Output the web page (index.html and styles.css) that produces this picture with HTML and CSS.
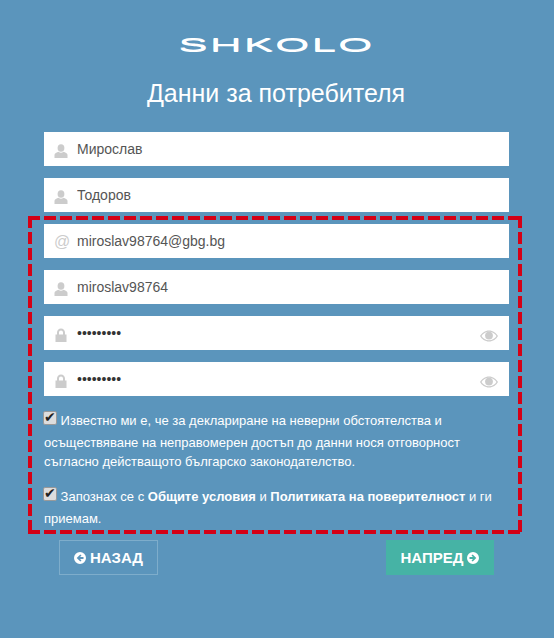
FILE: index.html
```html
<!DOCTYPE html>
<html lang="bg">
<head>
<meta charset="utf-8">
<title>Данни за потребителя</title>
<link rel="stylesheet" href="styles.css">
</head>
<body>

<div class="logo"><span>SHKOLO</span></div>
<h1 class="title">Данни за потребителя</h1>

<form class="form">
  <div class="field">
    <svg class="icon" viewBox="0 0 14 14"><use href="#user"/></svg>
    <input type="text" value="Мирослав">
  </div>
  <div class="field">
    <svg class="icon" viewBox="0 0 14 14"><use href="#user"/></svg>
    <input type="text" value="Тодоров">
  </div>

  <div class="marked">
    <div class="field">
      <span class="icon at">@</span>
      <input type="text" value="miroslav98764@gbg.bg">
    </div>
    <div class="field">
      <svg class="icon" viewBox="0 0 14 14"><use href="#user"/></svg>
      <input type="text" value="miroslav98764">
    </div>
    <div class="field">
      <svg class="icon" viewBox="0 0 14 14"><use href="#lock"/></svg>
      <input type="password" value="miroslav9">
      <svg class="eye" viewBox="0 0 18 12"><use href="#eye"/></svg>
    </div>
    <div class="field">
      <svg class="icon" viewBox="0 0 14 14"><use href="#lock"/></svg>
      <input type="password" value="miroslav9">
      <svg class="eye" viewBox="0 0 18 12"><use href="#eye"/></svg>
    </div>

    <label class="agree first">
      <input type="checkbox" checked>
      Известно ми е, че за деклариране на неверни обстоятелства и осъществяване на неправомерен достъп до данни нося отговорност съгласно действащото българско законодателство.
    </label>
    <label class="agree">
      <input type="checkbox" checked>
      Запознах се с <b>Общите условия</b> и <b>Политиката на поверителност</b> и ги приемам.
    </label>
  </div>

  <div class="actions">
    <a class="btn back" href="#">
      <svg class="arrow" viewBox="0 0 12 12"><use href="#left"/></svg>
      НАЗАД
    </a>
    <a class="btn next" href="#">
      НАПРЕД
      <svg class="arrow flip" viewBox="0 0 12 12"><use href="#left"/></svg>
    </a>
  </div>
</form>

<svg class="defs" width="0" height="0">
  <defs>
    <g id="user">
      <ellipse cx="7" cy="4" rx="3.400" ry="3.800"/>
      <path d="M.5 14V10.800C.5 9.200 2.800 8.300 4.600 7.700 5.300 8.400 6.100 8.700 7 8.700S8.700 8.400 9.400 7.700C11.200 8.300 13.500 9.200 13.500 10.800V14Z"/>
    </g>
    <g id="lock">
      <path d="M1.500 6.500H3V4.500C3 2.200 4.700.5 7 .5S11 2.200 11 4.500V6.500H12.500V14H1.500ZM5 6.500H9V4.500C9 3.300 8.100 2.400 7 2.400S5 3.300 5 4.500Z"/>
    </g>
    <g id="eye">
      <path fill-rule="evenodd" d="M9 .5C13 .5 16.300 3 18 6 16.300 9 13 11.500 9 11.500S1.700 9 0 6C1.700 3 5 .5 9 .5ZM9 1.700C5.800 1.700 3 3.500 1.500 6 3 8.500 5.800 10.300 9 10.300S15 8.500 16.500 6C15 3.500 12.200 1.700 9 1.700Z"/>
      <circle cx="9" cy="5.600" r="3.900"/>
    </g>
    <g id="left">
      <path fill-rule="evenodd" d="M6 0A6 6 0 1 1 6 12 6 6 0 0 1 6 0ZM6.300 2.400 2.700 6 6.300 9.600 7.500 8.400 6 6.900H9.500V5.100H6L7.500 3.600Z"/>
    </g>
  </defs>
</svg>

</body>
</html>
```

FILE: styles.css
```css
* { box-sizing: border-box; }

body {
  margin: 0;
  background-color: #5b95bc;
  color: #fff;
  font-family: "Liberation Sans", Arial, sans-serif;
  font-size: 14px;
}

.logo {
  height: 16px;
  margin-top: 37px;
  text-align: center;
  line-height: 16px;
}

.logo span {
  display: inline-block;
  font-size: 19px;
  letter-spacing: 1px;
  text-shadow: 0 1px 0 #fff;
  transform: scaleX(2.3);
}

.title {
  margin: 26px 2px 25px 0;
  font-size: 25px;
  font-weight: normal;
  line-height: 28px;
  text-align: center;
}

.form {
  margin: 0 45px 0 44px;
}

.field {
  display: flex;
  align-items: center;
  height: 34px;
  margin-bottom: 12px;
  padding: 0 11px 0 10px;
  background-color: #fff;
}

.field input {
  flex: 1;
  min-width: 0;
  height: 100%;
  padding: 0 0 0 9px;
  border: none;
  outline: none;
  background: none;
  color: #555;
  font-family: inherit;
  font-size: 14px;
}

.field input[type="password"] {
  color: #333;
}

.icon {
  flex: none;
  width: 14px;
  height: 14px;
  margin-top: 4px;
  fill: #ccc;
}

.at {
  margin-top: 2px;
  color: #ccc;
  font-size: 16px;
  line-height: 14px;
  text-align: center;
}

.eye {
  flex: none;
  width: 18px;
  height: 12px;
  margin-top: 6px;
  fill: #ccc;
}

.marked {
  margin: -8px -13px 0 -16px;
  padding: 8px 13px 6px 16px;
  background:
    linear-gradient(90deg, #d40016 12px, transparent 12px) 0 0 / 16px 4px repeat-x,
    linear-gradient(90deg, #d40016 12px, transparent 12px) 0 100% / 16px 4px repeat-x,
    linear-gradient(#d40016 12px, transparent 12px) 0 0 / 4px 16px repeat-y,
    linear-gradient(#d40016 12px, transparent 12px) 100% 0 / 4px 16px repeat-y;
}

.agree {
  display: block;
  font-size: 13px;
  line-height: 19px;
}

.agree.first {
  margin-bottom: 16px;
  padding-top: 3px;
}

.agree input {
  appearance: none;
  position: relative;
  width: 14px;
  height: 14px;
  margin: 0 0 8px -1px;
  border: 1px solid #999;
  border-radius: 2px;
  background-color: #ddd;
  vertical-align: -8px;
}

.agree input::after {
  content: "\2714";
  position: absolute;
  left: 0;
  top: -2px;
  color: #222;
  font-family: "DejaVu Sans", sans-serif;
  font-size: 14px;
  line-height: 14px;
}

.actions {
  display: flex;
  justify-content: space-between;
  margin: 6px 15px 0;
}

.btn {
  display: flex;
  align-items: center;
  justify-content: center;
  gap: 4px;
  height: 35px;
  color: #fff;
  font-size: 15px;
  font-weight: bold;
  text-decoration: none;
}

.back {
  width: 99px;
  border: 1px solid #7eadcb;
}

.next {
  width: 108px;
  background-color: #46b3a5;
}

.arrow {
  width: 12px;
  height: 12px;
  fill: #fff;
}

.flip {
  transform: scaleX(-1);
}

.defs {
  position: absolute;
}
```
